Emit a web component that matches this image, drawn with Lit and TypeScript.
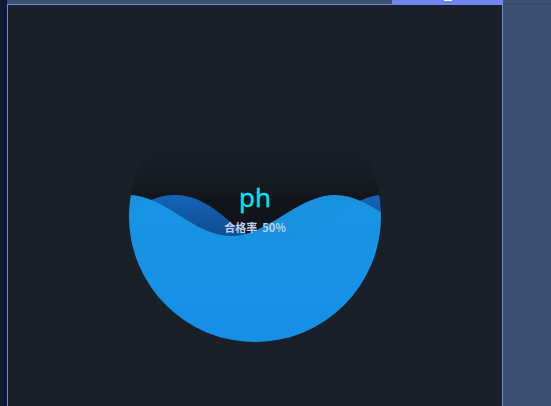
import { LitElement, html, css } from "lit";
import { customElement } from "lit/decorators.js";

@customElement("app-root")
export class AppRoot extends LitElement {
  static styles = css`
    :host {
      display: grid;
      grid-template-columns: 7px 496px 1fr;
      width: 551px;
      height: 406px;
      overflow: hidden;
      background: #0f1a33;
      font-family: "Noto Sans CJK SC", "Noto Sans", sans-serif;
    }
    .side {
      background: #0f1a33;
    }
    .main {
      display: grid;
      grid-template-rows: 4px 1fr;
    }
    .top {
      display: grid;
      grid-template-columns: 385px 1fr;
      background: #3a5070;
    }
    .progress {
      background: #7085f0;
      display: flex;
      justify-content: center;
    }
    .tick {
      width: 8px;
      height: 1px;
      background: #fff;
    }
    .panel {
      background: #1a2028;
      border: 1px solid #7085f0;
      border-bottom: none;
      display: flex;
      justify-content: center;
      padding-top: 84px;
      box-sizing: border-box;
    }
    .gauge {
      position: relative;
      width: 254px;
      height: 254px;
    }
    svg {
      display: block;
    }
    .label {
      position: absolute;
      left: 0;
      right: 0;
      top: 92px;
      display: flex;
      flex-direction: column;
      align-items: center;
    }
    .name {
      color: #00e5f0;
      font-size: 26px;
      line-height: 32px;
      -webkit-text-stroke: 0.3px #00e5f0;
      font-family: "Noto Sans", "Noto Sans CJK SC", sans-serif;
    }
    .rate {
      color: #bfd0ec;
      font-size: 11px;
      font-weight: 700;
      line-height: 16px;
      margin-top: 6px;
      white-space: pre;
    }
    .rest {
      background: #3a5070;
      display: grid;
      grid-template-rows: 4px 1fr;
    }
    .rest-top {
      background: #3d5273;
      border-bottom: 1px solid #34486a;
    }
  `;

  render() {
    return html`
      <div class="side"></div>
      <div class="main">
        <div class="top"><div></div><div class="progress"><div class="tick"></div></div></div>
        <div class="panel">
          <div class="gauge">
            <svg width="254" height="254" viewBox="0 0 254 254">
              <defs>
                <clipPath id="c"><circle cx="127" cy="127" r="126"></circle></clipPath>
                <linearGradient id="bg" x1="0" y1="0" x2="0" y2="1">
                  <stop offset="0.22" stop-color="#1a2028"></stop>
                  <stop offset="0.34" stop-color="#171c24"></stop>
                  <stop offset="0.44" stop-color="#11151b"></stop>
                </linearGradient>
                <linearGradient id="back" x1="0" y1="0" x2="0" y2="1">
                  <stop offset="0" stop-color="#1565bb"></stop>
                  <stop offset="0.24" stop-color="#124f94"></stop>
                </linearGradient>
                <linearGradient id="front" x1="0" y1="0" x2="0" y2="1">
                  <stop offset="0" stop-color="#1997e6"></stop>
                  <stop offset="1" stop-color="#1592ea"></stop>
                </linearGradient>
              </defs>
              <g clip-path="url(#c)">
                <rect x="0" y="0" width="254" height="254" fill="url(#bg)"></rect>
                <path
                  d="M-10 130 C 10 118 25 106 47 106 C 90 106 110 154 145 154 C 185 154 220 106 255 106 L255 254 L-10 254 Z"
                  fill="url(#back)"
                ></path>
                <path
                  d="M0 106 C 37.5 106 65.5 147 103 147 C 140.5 147 169.5 106 207 106 C 225 106 240 115 254 124 L254 254 L0 254 Z"
                  fill="url(#front)"
                  fill-opacity="0.96"
                ></path>
              </g>
            </svg>
            <div class="label">
              <div class="name">ph</div>
              <div class="rate">合格率  50%</div>
            </div>
          </div>
        </div>
      </div>
      <div class="rest"><div class="rest-top"></div><div></div></div>
    `;
  }
}
